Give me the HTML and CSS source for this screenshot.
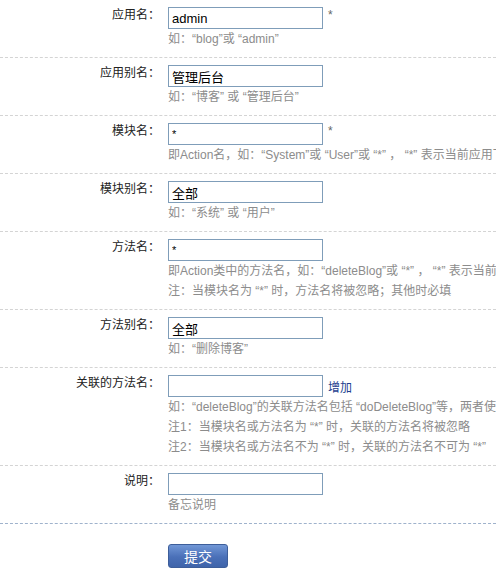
FILE: index.html
```html
<!doctype html>
<html lang="zh-CN">
<head>
  <meta charset="utf-8">
  <title>添加权限节点</title>
  <link rel="stylesheet" href="styles.css">
</head>
<body>
<form class="node-form">
  <div class="row">
    <label class="row-label" for="app">应用名：</label>
    <div class="row-field">
      <div class="field-line"><input id="app" class="text-input" type="text" value="admin"><span class="required">*</span></div>
      <p class="hint">如：“blog”或 “admin”</p>
    </div>
  </div>
  <div class="row">
    <label class="row-label" for="app-alias">应用别名：</label>
    <div class="row-field">
      <div class="field-line"><input id="app-alias" class="text-input" type="text" value="管理后台"></div>
      <p class="hint">如：“博客” 或 “管理后台”</p>
    </div>
  </div>
  <div class="row">
    <label class="row-label" for="module">模块名：</label>
    <div class="row-field">
      <div class="field-line"><input id="module" class="text-input small" type="text" value="*"><span class="required">*</span></div>
      <p class="hint">即Action名，如：“System”或 “User”或 “*” ， “*” 表示当前应用下的所有模块</p>
    </div>
  </div>
  <div class="row">
    <label class="row-label" for="module-alias">模块别名：</label>
    <div class="row-field">
      <div class="field-line"><input id="module-alias" class="text-input" type="text" value="全部"></div>
      <p class="hint">如：“系统” 或 “用户”</p>
    </div>
  </div>
  <div class="row">
    <label class="row-label" for="method">方法名：</label>
    <div class="row-field">
      <div class="field-line"><input id="method" class="text-input small" type="text" value="*"></div>
      <p class="hint">即Action类中的方法名，如：“deleteBlog”或 “*” ， “*” 表示当前模块下的所有方法</p>
      <p class="hint">注：当模块名为 “*” 时，方法名将被忽略；其他时必填</p>
    </div>
  </div>
  <div class="row">
    <label class="row-label" for="method-alias">方法别名：</label>
    <div class="row-field">
      <div class="field-line"><input id="method-alias" class="text-input" type="text" value="全部"></div>
      <p class="hint">如：“删除博客”</p>
    </div>
  </div>
  <div class="row">
    <label class="row-label" for="related">关联的方法名：</label>
    <div class="row-field">
      <div class="field-line"><input id="related" class="text-input" type="text"><a class="add-link" href="#">增加</a></div>
      <p class="hint">如：“deleteBlog”的关联方法名包括 “doDeleteBlog”等，两者使用同一权限</p>
      <p class="hint">注1：当模块名或方法名为 “*” 时，关联的方法名将被忽略</p>
      <p class="hint">注2：当模块名或方法名不为 “*” 时，关联的方法名不可为 “*”</p>
    </div>
  </div>
  <div class="row last">
    <label class="row-label" for="remark">说明：</label>
    <div class="row-field">
      <div class="field-line"><input id="remark" class="text-input" type="text"></div>
      <p class="hint">备忘说明</p>
    </div>
  </div>
  <div class="actions">
    <button class="submit" type="submit">提交</button>
  </div>
</form>
</body>
</html>
```

FILE: styles.css
```css
* {
  box-sizing: border-box;
  margin: 0;
  padding: 0;
}
html, body {
  overflow: hidden;
}
body {
  background: #fff;
  color: #333;
  font-family: "Liberation Sans", "Noto Sans CJK SC", sans-serif;
  font-size: 12px;
}
.node-form {
  width: 100%;
}
.row {
  display: grid;
  grid-template-columns: 160px 1fr;
  column-gap: 8px;
  padding: 7px 0 8px;
  border-bottom: 1px dashed #d4d4d4;
}
.row.last {
  border-bottom-color: #9fb2cc;
}
.row-label {
  text-align: right;
  line-height: 16px;
  color: #222;
  white-space: nowrap;
}
.row-field {
  min-width: 0;
}
.field-line {
  display: flex;
  align-items: center;
  gap: 5px;
  height: 22px;
}
.text-input {
  width: 155px;
  height: 22px;
  padding: 0 3px;
  border: 1px solid #7f9db9;
  background: #fff;
  color: #000;
  font-family: "Liberation Sans", "Noto Sans CJK SC", sans-serif;
  font-size: 13px;
  outline: none;
}
.text-input.small {
  font-size: 11px;
}
.required {
  color: #666;
  font-size: 12px;
  margin-top: -6px;
}
.add-link {
  color: #1d3f8f;
  text-decoration: none;
}
.hint {
  color: #8c8c8c;
  line-height: 20px;
  white-space: nowrap;
}
.actions {
  padding: 20px 0 0 168px;
}
.submit {
  width: 60px;
  height: 24px;
  border: 1px solid #3d5e9a;
  border-radius: 3px;
  background: linear-gradient(#7197d6, #4a70b8 55%, #3f64aa);
  color: #fff;
  font-family: "Noto Sans CJK SC", sans-serif;
  font-size: 14px;
  cursor: pointer;
}
```
